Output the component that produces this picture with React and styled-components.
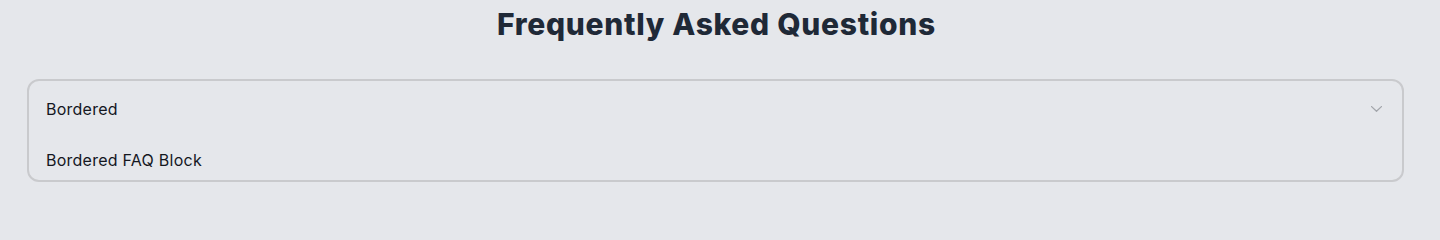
import React from "react";
import styled, { createGlobalStyle } from "styled-components";

const GlobalStyle = createGlobalStyle`
  * { box-sizing: border-box; }
  html, body { margin: 0; padding: 0; }
  body {
    background: #e5e7eb;
    font-family: Inter, "Noto Sans", "Liberation Sans", sans-serif;
    color: #111827;
    -webkit-font-smoothing: antialiased;
  }
`;

const Page = styled.main`
  padding: 6px 36px 0 27px;
`;

const Heading = styled.h2`
  margin: 0 0 37px;
  text-align: center;
  font-size: 30px;
  line-height: 36px;
  font-weight: 800;
  letter-spacing: 0.7px;
  color: #1f2937;
  padding-left: 2px;
`;

const Collapse = styled.div`
  border: 2px solid #c9cacd;
  border-radius: 12px;
`;

const Title = styled.div`
  display: flex;
  align-items: center;
  justify-content: space-between;
  min-height: 60px;
  padding: 14px 20px 18px 17px;
  font-size: 16px;
  line-height: 24px;
  letter-spacing: 0.25px;
  color: #14171f;
`;

const Content = styled.div`
  padding: 7px 17px 8px;
  font-size: 16px;
  line-height: 24px;
  letter-spacing: 0.25px;
  color: #14171f;
`;

const Chevron = styled.svg`
  width: 11px;
  height: 6px;
  flex: none;
  color: #a3a6ab;
`;

export default function App() {
  return (
    <>
      <GlobalStyle />
      <Page>
        <Heading>Frequently Asked Questions</Heading>
        <Collapse>
          <Title>
            <span>Bordered</span>
            <Chevron viewBox="0 0 11 6" fill="none">
              <polyline
                points="0.6,0.6 5.5,5.2 10.4,0.6"
                stroke="currentColor"
                strokeWidth="1.3"
                strokeLinecap="round"
                strokeLinejoin="round"
              />
            </Chevron>
          </Title>
          <Content>Bordered FAQ Block</Content>
        </Collapse>
      </Page>
    </>
  );
}
